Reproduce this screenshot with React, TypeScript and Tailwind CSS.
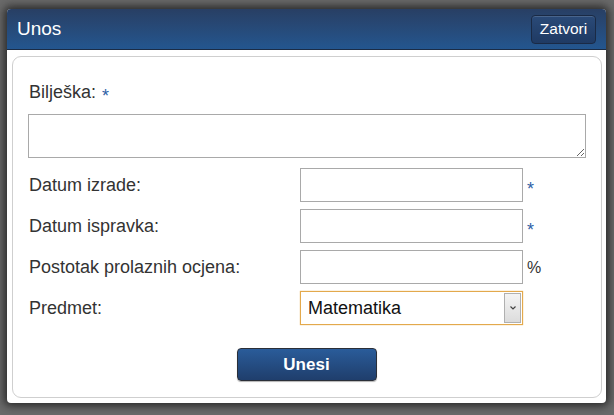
import React from 'react';

const font = { fontFamily: '"Liberation Sans", Arial, sans-serif' };

const Star = () => (
  <span className="text-[#2f5fa6] text-[18px] leading-none translate-y-[4px] inline-block">*</span>
);

const FieldRow = ({ label, suffix, children }: { label: string; suffix?: React.ReactNode; children: React.ReactNode }) => (
  <div className="flex items-center h-[34px]">
    <label className="w-[272px] pl-[1px] text-[18px] text-[#333]">{label}</label>
    {children}
    <span className="ml-[4px] flex items-center">{suffix}</span>
  </div>
);

const App: React.FC = () => {
  return (
    <div style={font} className="w-[614px] h-[415px] bg-[#6a6a6a] pt-[9px] pl-[7px] overflow-hidden">
      <div className="w-[599px] h-[394px] bg-white rounded-[4px] shadow-[0_0_9px_3px_rgba(20,20,20,0.75)] flex flex-col">
        {/* Header */}
        <div className="h-[41px] rounded-t-[4px] bg-gradient-to-b from-[#283f64] to-[#23568f] border-b border-[#1b2c45] flex items-center justify-between pl-[10px] pr-[10px]">
          <h1 className="text-white text-[19px]">Unos</h1>
          <button className="h-[29px] w-[65px] rounded-[4px] border border-[#1a2a45] bg-gradient-to-b from-[#2a4a78] to-[#1f3a63] text-white text-[15.5px] shadow-[inset_0_1px_0_rgba(255,255,255,0.15)]">
            Zatvori
          </button>
        </div>

        {/* Body */}
        <div className="flex-1 pt-[6px] pl-[5px] pr-[4px] pb-[5px]">
          <div className="h-full border border-[#cfcfcf] rounded-[9px] pl-[15px] pr-[16px] pt-[23px]">
            <div className="flex items-center h-[24px] pl-[1px] text-[18px] text-[#333]">
              <span>Bilješka:</span>
              <span className="ml-[6px]"><Star /></span>
            </div>
            <textarea className="mt-[10px] block w-[558px] h-[44px] border border-[#a9a9a9] outline-none" />

            <div className="mt-[10px] flex flex-col gap-[7px]">
              <FieldRow label="Datum izrade:" suffix={<Star />}>
                <input className="w-[223px] h-[34px] border border-[#a9a9a9] outline-none" />
              </FieldRow>
              <FieldRow label="Datum ispravka:" suffix={<Star />}>
                <input className="w-[223px] h-[34px] border border-[#a9a9a9] outline-none" />
              </FieldRow>
              <FieldRow label="Postotak prolaznih ocjena:" suffix={<span className="text-[16px] text-[#333] translate-y-[1px]">%</span>}>
                <input className="w-[223px] h-[34px] border border-[#a9a9a9] outline-none" />
              </FieldRow>
              <FieldRow label="Predmet:">
                <div className="w-[223px] h-[34px] border border-[#e3a94c] shadow-[0_0_1px_rgba(227,169,76,0.9)] flex items-center bg-white">
                  <span className="flex-1 pl-[7px] text-[18px] text-[#111]">Matematika</span>
                  <div className="w-[17px] h-[30px] mr-[1px] border border-[#b0b0b0] bg-gradient-to-b from-[#f4f4f4] to-[#dcdcdc] flex items-center justify-center">
                    <svg width="8" height="6" viewBox="0 0 8 6" fill="none">
                      <path d="M1.5 1.5 L4 4 L6.5 1.5" stroke="#444" strokeWidth="1.2" />
                    </svg>
                  </div>
                </div>
              </FieldRow>
            </div>

            <div className="mt-[23px] flex justify-center">
              <button className="w-[140px] h-[33px] rounded-[4px] border border-[#2b2f38] bg-gradient-to-b from-[#2a5c9a] to-[#1f3e6c] text-white text-[17px] font-bold shadow-[0_1px_1px_rgba(0,0,0,0.3)]">
                Unesi
              </button>
            </div>
          </div>
        </div>
      </div>
    </div>
  );
};

export default App;
